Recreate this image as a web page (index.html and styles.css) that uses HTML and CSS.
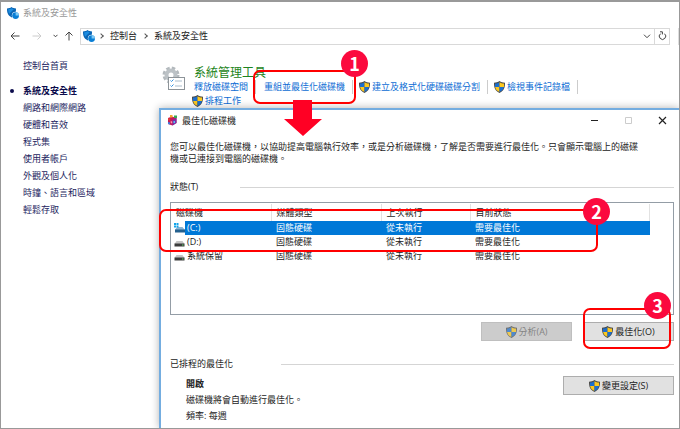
FILE: index.html
```html
<!DOCTYPE html>
<html lang="zh-Hant">
<head>
    <meta charset="UTF-8">
    <meta name="viewport" content="width=device-width, initial-scale=1.0">
    <title>系統及安全性</title>
    <link rel="stylesheet" href="styles.css">
</head>
<body>
    <svg class="sprite" aria-hidden="true">
        <symbol id="security" viewBox="0 0 12 12">
            <path d="M4.500 0C3.300 1 1.800 1.300 0 1.400c0 4 .5 6.600 4.800 9C8.500 8.500 9 5.500 9 1.400 7.300 1.300 5.800 1 4.500 0z" fill="#0b66b5"/>
            <path d="M4.500 1.300C3.500 2 2.500 2.200 1.200 2.300c.1 2 .3 3.300 1 4.400L6.800 2.200C5.800 2 5.200 1.700 4.500 1.300z" fill="#1c8ce0"/>
            <circle cx="8.600" cy="8.600" r="3.800" fill="#fff"/>
            <circle cx="8.600" cy="8.600" r="3.400" fill="#0a7fd6"/>
            <path d="M8.600 5.200v3.400H12A3.400 3.400 0 0 0 8.600 5.200z" fill="#7fc9f5"/>
        </symbol>
        <symbol id="shield" viewBox="0 0 11 12">
            <path d="M5.500 0C4 1.200 2.200 1.600 0 1.700 0 6.500.8 9.600 5.500 12 10.200 9.600 11 6.500 11 1.700 8.800 1.600 7 1.200 5.500 0z" fill="#4a4a48"/>
            <path d="M5.500 1.200C4.300 2 2.700 2.500 1 2.600V6h4.500z" fill="#1b6fd0"/>
            <path d="M5.500 1.200C6.700 2 8.300 2.500 10 2.600V6H5.500z" fill="#fcc81e"/>
            <path d="M1.100 6c.4 2.400 1.700 3.800 4.400 5V6z" fill="#fcc81e"/>
            <path d="M9.900 6c-.4 2.400-1.700 3.800-4.400 5V6z" fill="#1b6fd0"/>
        </symbol>
        <symbol id="drive" viewBox="0 0 11 10">
            <path d="M2.500 4h6L10.500 7H.5z" fill="#c4c4c4"/>
            <rect x=".5" y="6.500" width="10" height="3" fill="#3c3c3c"/>
            <rect x="8" y="7.500" width="1.500" height="1" fill="#5fd36a"/>
        </symbol>
        <symbol id="system-drive" viewBox="0 0 11 10">
            <path d="M3 4h5.500L11 7H1z" fill="#8bb4d3"/>
            <path d="M0 0h2v2H0zM2.500 0h2v2h-2zM0 2.500h2v2H0zM2.500 2.500h2v2h-2z" fill="#12a4ea"/>
            <rect x="1" y="6.500" width="10" height="3" fill="#24618f"/>
        </symbol>
    </svg>

    <div class="explorer">
        <header class="titlebar">
            <svg class="icon-security"><use href="#security"/></svg>
            <span>系統及安全性</span>
        </header>

        <nav class="toolbar">
            <button type="button" class="nav-btn" aria-label="上一頁">
                <svg width="10" height="8" viewBox="0 0 10 8"><path d="M9.500 4H1M4.500.5L1 4l3.500 3.500"/></svg>
            </button>
            <button type="button" class="nav-btn off" aria-label="下一頁">
                <svg width="10" height="8" viewBox="0 0 10 8"><path d="M.5 4H9M5.500.5L9 4 5.500 7.500"/></svg>
            </button>
            <button type="button" class="nav-btn small" aria-label="最近的位置">
                <svg width="5" height="4" viewBox="0 0 5 4"><path d="M.5.8l2 2 2-2"/></svg>
            </button>
            <button type="button" class="nav-btn small" aria-label="上移">
                <svg width="8" height="10" viewBox="0 0 8 10"><path d="M4 9.500V1M.5 4.500L4 1l3.500 3.500"/></svg>
            </button>
            <div class="address">
                <svg class="icon-security"><use href="#security"/></svg>
                <span class="crumb-sep"></span>
                <a href="#">控制台</a>
                <span class="crumb-sep"></span>
                <a href="#">系統及安全性</a>
                <button type="button" class="address-btn drop" aria-label="歷程記錄">
                    <svg width="8" height="5" viewBox="0 0 8 5"><path d="M1 .7L4 3.700 7 .7"/></svg>
                </button>
                <button type="button" class="address-btn refresh" aria-label="重新整理">
                    <svg width="9" height="10" viewBox="0 0 9 10"><path d="M6.500 2.700A3.200 3.200 0 1 1 2.500 2.700M2 .8h2.400v2.600"/></svg>
                </button>
            </div>
            <div class="search"></div>
        </nav>

        <div class="content">
            <aside class="sidebar">
                <a href="#" class="home">控制台首頁</a>
                <ul>
                    <li class="current"><a href="#">系統及安全性</a></li>
                    <li><a href="#">網路和網際網路</a></li>
                    <li><a href="#">硬體和音效</a></li>
                    <li><a href="#">程式集</a></li>
                    <li><a href="#">使用者帳戶</a></li>
                    <li><a href="#">外觀及個人化</a></li>
                    <li><a href="#">時鐘、語言和區域</a></li>
                    <li><a href="#">輕鬆存取</a></li>
                </ul>
            </aside>

            <main class="category">
                <svg class="icon-tools" viewBox="0 0 23 24">
                    <circle cx="9" cy="9" r="6.500" fill="none" stroke="#b3b9bd" stroke-width="4" stroke-dasharray="3.100 2"/>
                    <circle cx="9" cy="9" r="4.500" fill="none" stroke="#bcc2c6" stroke-width="4"/>
                    <rect x="6.500" y="11.500" width="16" height="12" fill="#fff" stroke="#8d9499"/>
                    <path d="M8.500 14.500l1 1 2-2M8.500 19.500l1 1 2-2" fill="none" stroke="#2f8fe0"/>
                    <path d="M13 15h7M13 20h7" stroke="#a9bccb"/>
                </svg>
                <div class="category-text">
                    <h1>系統管理工具</h1>
                    <ul class="tasks">
                        <li><a href="#">釋放磁碟空間</a></li>
                        <li class="marked">
                            <a href="#">重組並最佳化磁碟機</a>
                            <div class="callout callout-one"><span class="badge">1</span></div>
                            <svg class="arrow" viewBox="0 0 38 36"><path d="M9 0h19v19h10L19 36 0 19h9z" fill="#ff0024"/></svg>
                        </li>
                        <li><svg class="icon-shield"><use href="#shield"/></svg><a href="#">建立及格式化硬碟磁碟分割</a></li>
                        <li><svg class="icon-shield"><use href="#shield"/></svg><a href="#">檢視事件記錄檔</a></li>
                        <li class="last"><svg class="icon-shield"><use href="#shield"/></svg><a href="#">排程工作</a></li>
                    </ul>
                </div>
            </main>
        </div>

        <section class="dialog" role="dialog" aria-labelledby="dialog-title">
            <header class="dialog-bar">
                <svg class="icon-defrag" viewBox="0 0 11 11">
                    <path d="M1 3l4-1.500L9.500 3v5L5.500 10.500 1 9z" fill="#c2185b"/>
                    <path d="M5.500 5L9.500 3v5l-4 2.500z" fill="#7b2fa8"/>
                    <path d="M1 3l2.200.7v2L1 5z" fill="#e53935"/>
                    <path d="M3.700 6l1.500.5v2L3.700 8z" fill="#ff9aa8"/>
                    <path d="M1 7l2 .6v1.800L1 9z" fill="#3c7de0"/>
                    <rect x="3" y="0" width="2.500" height="2.500" fill="#f3a52c"/>
                    <rect x="7" y=".5" width="3" height="2.500" fill="#35a853"/>
                    <rect x="6.500" y="6" width="1.500" height="2" fill="#4fc3f7"/>
                </svg>
                <h2 id="dialog-title">最佳化磁碟機</h2>
                <button type="button" class="caption-btn" aria-label="最小化">
                    <svg width="9" height="9" viewBox="0 0 9 9"><path d="M1 4.500h7" stroke="#222"/></svg>
                </button>
                <button type="button" class="caption-btn" aria-label="最大化" disabled>
                    <svg width="9" height="9" viewBox="0 0 9 9"><path d="M1.500 1.500h6v6h-6z" stroke="#ccc" fill="none"/></svg>
                </button>
                <button type="button" class="caption-btn" aria-label="關閉">
                    <svg width="9" height="9" viewBox="0 0 9 9"><path d="M1 1l7 7M8 1L1 8" stroke="#222" stroke-width="1.200"/></svg>
                </button>
            </header>

            <div class="dialog-body">
                <p class="intro">您可以最佳化磁碟機，以協助提高電腦執行效率，或是分析磁碟機，了解是否需要進行最佳化。只會顯示電腦上的磁碟機或已連接到電腦的磁碟機。</p>

                <h3 class="group status">狀態(T)</h3>
                <div class="drives">
                    <table>
                        <thead>
                            <tr>
                                <th class="col-drive">磁碟機</th>
                                <th class="col-media">媒體類型</th>
                                <th class="col-last">上次執行</th>
                                <th>目前狀態</th>
                            </tr>
                        </thead>
                        <tbody>
                            <tr class="selected">
                                <td><div class="drive"><svg class="icon-drive"><use href="#system-drive"/></svg><span>(C:)</span></div></td>
                                <td>固態硬碟</td>
                                <td>從未執行</td>
                                <td>需要最佳化</td>
                            </tr>
                            <tr>
                                <td><div class="drive"><svg class="icon-drive"><use href="#drive"/></svg><span>(D:)</span></div></td>
                                <td>固態硬碟</td>
                                <td>從未執行</td>
                                <td>需要最佳化</td>
                            </tr>
                            <tr>
                                <td><div class="drive"><svg class="icon-drive"><use href="#drive"/></svg><span>系統保留</span></div></td>
                                <td>固態硬碟</td>
                                <td>從未執行</td>
                                <td>需要最佳化</td>
                            </tr>
                        </tbody>
                    </table>
                    <div class="callout callout-two"><span class="badge">2</span></div>
                </div>

                <div class="actions">
                    <button type="button" class="btn" disabled><svg class="icon-shield"><use href="#shield"/></svg>分析(A)</button>
                    <div class="marked">
                        <button type="button" class="btn"><svg class="icon-shield"><use href="#shield"/></svg>最佳化(O)</button>
                        <div class="callout callout-three"><span class="badge">3</span></div>
                    </div>
                </div>

                <h3 class="group schedule-title">已排程的最佳化</h3>
                <div class="schedule">
                    <div class="schedule-text">
                        <p><strong>開啟</strong></p>
                        <p>磁碟機將會自動進行最佳化。</p>
                        <p>頻率: 每週</p>
                    </div>
                    <button type="button" class="btn wide"><svg class="icon-shield"><use href="#shield"/></svg>變更設定(S)</button>
                </div>
            </div>
        </section>
    </div>
</body>
</html>
```

FILE: styles.css
```css
* {
    box-sizing: border-box;
}

body {
    margin: 0;
    font-family: "Open Sans", "Noto Sans CJK TC", sans-serif;
    font-size: 9px;
    line-height: 12px;
    color: #222;
    background-color: #fff;
}

h1, h2, h3, p, ul {
    margin: 0;
    padding: 0;
    font-weight: normal;
    font-size: 9px;
}

ul {
    list-style: none;
}

a {
    color: inherit;
    text-decoration: none;
}

button {
    font: inherit;
    color: inherit;
    padding: 0;
    border: none;
    background: none;
}

svg {
    display: block;
    flex: none;
}

.sprite {
    position: absolute;
    width: 0;
    height: 0;
}

.icon-security {
    width: 12px;
    height: 12px;
}

.icon-shield {
    width: 11px;
    height: 12px;
}

.icon-drive {
    width: 11px;
    height: 10px;
}

.icon-defrag {
    width: 11px;
    height: 11px;
}

.icon-tools {
    width: 23px;
    height: 24px;
}

/* control panel window */
.explorer {
    position: relative;
    display: flex;
    flex-direction: column;
    height: 100vh;
    overflow: hidden;
    border: 1px solid #999;
    border-top-width: 2px;
}

.titlebar {
    display: flex;
    align-items: center;
    gap: 4px;
    height: 22px;
    padding-left: 6px;
    color: #999;
}

.toolbar {
    display: flex;
    align-items: center;
    height: 24px;
    padding-left: 3px;
}

.nav-btn {
    display: flex;
    justify-content: center;
    width: 22px;
}

.nav-btn.small {
    width: 14px;
}

.nav-btn svg,
.address-btn svg {
    fill: none;
    stroke: #444;
}

.nav-btn.off svg {
    stroke: #ccc;
}

.address {
    display: flex;
    flex: 1;
    align-items: center;
    height: 17px;
    margin-left: 4px;
    padding-left: 2px;
    border: 1px solid #d9d9d9;
}

.crumb-sep {
    width: 4px;
    height: 4px;
    margin: 0 7px 0 4px;
    border: solid #555;
    border-width: 1px 1px 0 0;
    transform: rotate(45deg);
}

.address a + .crumb-sep {
    margin-left: 6px;
}

.address-btn {
    display: flex;
    align-items: center;
    justify-content: center;
    width: 15px;
    height: 100%;
}

.drop {
    margin-left: auto;
}

.refresh {
    border-left: 1px solid #d9d9d9;
}

.search {
    width: 9px;
    height: 17px;
    border-right: 1px solid #ddd;
}

.content {
    display: flex;
    flex: 1;
}

.sidebar {
    width: 161px;
    padding: 12px 0 0 22px;
    color: #1c1c5e;
}

.home {
    display: block;
    margin-bottom: 10px;
}

.sidebar li {
    line-height: 17px;
}

.current {
    display: flex;
    align-items: center;
    font-weight: 600;
    color: #0c0c4c;
}

.current::before {
    content: "";
    width: 4px;
    height: 4px;
    margin: 0 9px 0 -13px;
    border-radius: 50%;
    background-color: #0c0c4c;
}

.category {
    display: flex;
    flex: 1;
    gap: 7px;
    padding: 18px 80px 0 0;
}

.category-text {
    flex: 1;
}

.category h1 {
    padding-left: 2px;
    font-size: 12px;
    line-height: 14px;
    color: #1d8420;
}

.tasks {
    display: flex;
    flex-wrap: wrap;
    color: #0b6cd4;
    line-height: 14px;
}

.tasks li {
    display: flex;
    align-items: center;
    margin-right: 6px;
    padding-right: 5px;
    border-right: 1px solid #ccc;
}

.tasks .last {
    border-right: none;
}

.tasks a {
    padding: 0 2px;
}

/* optimize drives dialog */
.dialog {
    position: absolute;
    top: 106px;
    right: 0;
    bottom: 0;
    left: 158px;
    z-index: 1;
    border: solid #74ade0;
    border-width: 2px 0 0 2px;
    background-color: #fff;
    box-shadow: 0 0 8px rgba(0, 0, 0, 0.3);
}

.dialog-bar {
    display: flex;
    align-items: center;
    height: 21px;
    padding-left: 6px;
}

.dialog-bar h2 {
    flex: 1;
    padding-left: 4px;
}

.caption-btn {
    display: flex;
    justify-content: center;
    width: 34px;
}

.dialog-body {
    padding: 10px 5px 0 9px;
}

.intro {
    padding-right: 32px;
    line-height: 12px;
}

.group {
    display: flex;
    align-items: center;
    gap: 42px;
}

.group::after {
    content: "";
    flex: 1;
    height: 1px;
    background-color: #d5d5d5;
}

.status {
    margin-top: 16px;
}

.drives {
    position: relative;
    height: 113px;
    margin-top: 9px;
    padding: 1px 23px 0 0;
    border: 1px solid #949da6;
}

.drives table {
    width: 100%;
    table-layout: fixed;
    border-collapse: collapse;
}

.drives th {
    height: 17px;
    padding: 0 0 0 5px;
    border-right: 1px solid #e2e2e2;
    font-weight: normal;
    text-align: left;
}

.drives td {
    height: 14px;
    padding: 0 0 0 5px;
}

.drives tbody td:first-child {
    padding-left: 3px;
}

.col-drive {
    width: 100px;
}

.col-media {
    width: 110px;
}

.col-last {
    width: 89px;
}

.drive {
    display: flex;
    align-items: center;
    height: 14px;
}

.drive span {
    flex: 1;
    padding-left: 2px;
    line-height: 14px;
}

.selected td,
.selected .drive span {
    color: #fff;
    background-color: #0078d7;
}

.selected td:first-child {
    background: none;
}

.actions {
    display: flex;
    justify-content: flex-end;
    gap: 11px;
    margin-top: 7px;
}

.marked {
    position: relative;
}

.btn {
    display: flex;
    align-items: center;
    justify-content: center;
    gap: 2px;
    width: 91px;
    height: 19px;
    border: 1px solid #adadad;
    background-color: #e1e1e1;
}

.btn:disabled {
    color: #838383;
    border-color: #bfbfbf;
    background-color: #ccc;
}

.btn:disabled svg {
    opacity: 0.7;
}

.btn.wide {
    width: 111px;
}

.schedule-title {
    margin-top: 17px;
    gap: 48px;
}

.schedule {
    display: flex;
    align-items: flex-start;
    justify-content: space-between;
    margin-top: 6px;
    padding-left: 16px;
}

.schedule-text {
    line-height: 16px;
}

/* step markers */
.callout {
    position: absolute;
    z-index: 2;
    border: 2px solid #f00;
    border-radius: 7px;
    pointer-events: none;
}

.callout-one {
    top: -10px;
    right: -4px;
    left: -9px;
    height: 34px;
}

.callout-two {
    top: 6px;
    right: 75px;
    left: -12px;
    height: 43px;
}

.callout-three {
    top: -14px;
    right: 3px;
    left: 0;
    height: 41px;
}

.badge {
    position: absolute;
    top: -22px;
    right: -14px;
    width: 27px;
    height: 27px;
    border-radius: 50%;
    background-color: #fb0a3e;
    color: #fff;
    font: 600 18px/27px "Noto Sans CJK TC", sans-serif;
    text-align: center;
}

.callout-two .badge {
    top: -13px;
}

.callout-three .badge {
    top: -18px;
    right: -2px;
}

.arrow {
    position: absolute;
    top: 20px;
    left: 22px;
    z-index: 3;
    width: 38px;
    height: 36px;
}
```
